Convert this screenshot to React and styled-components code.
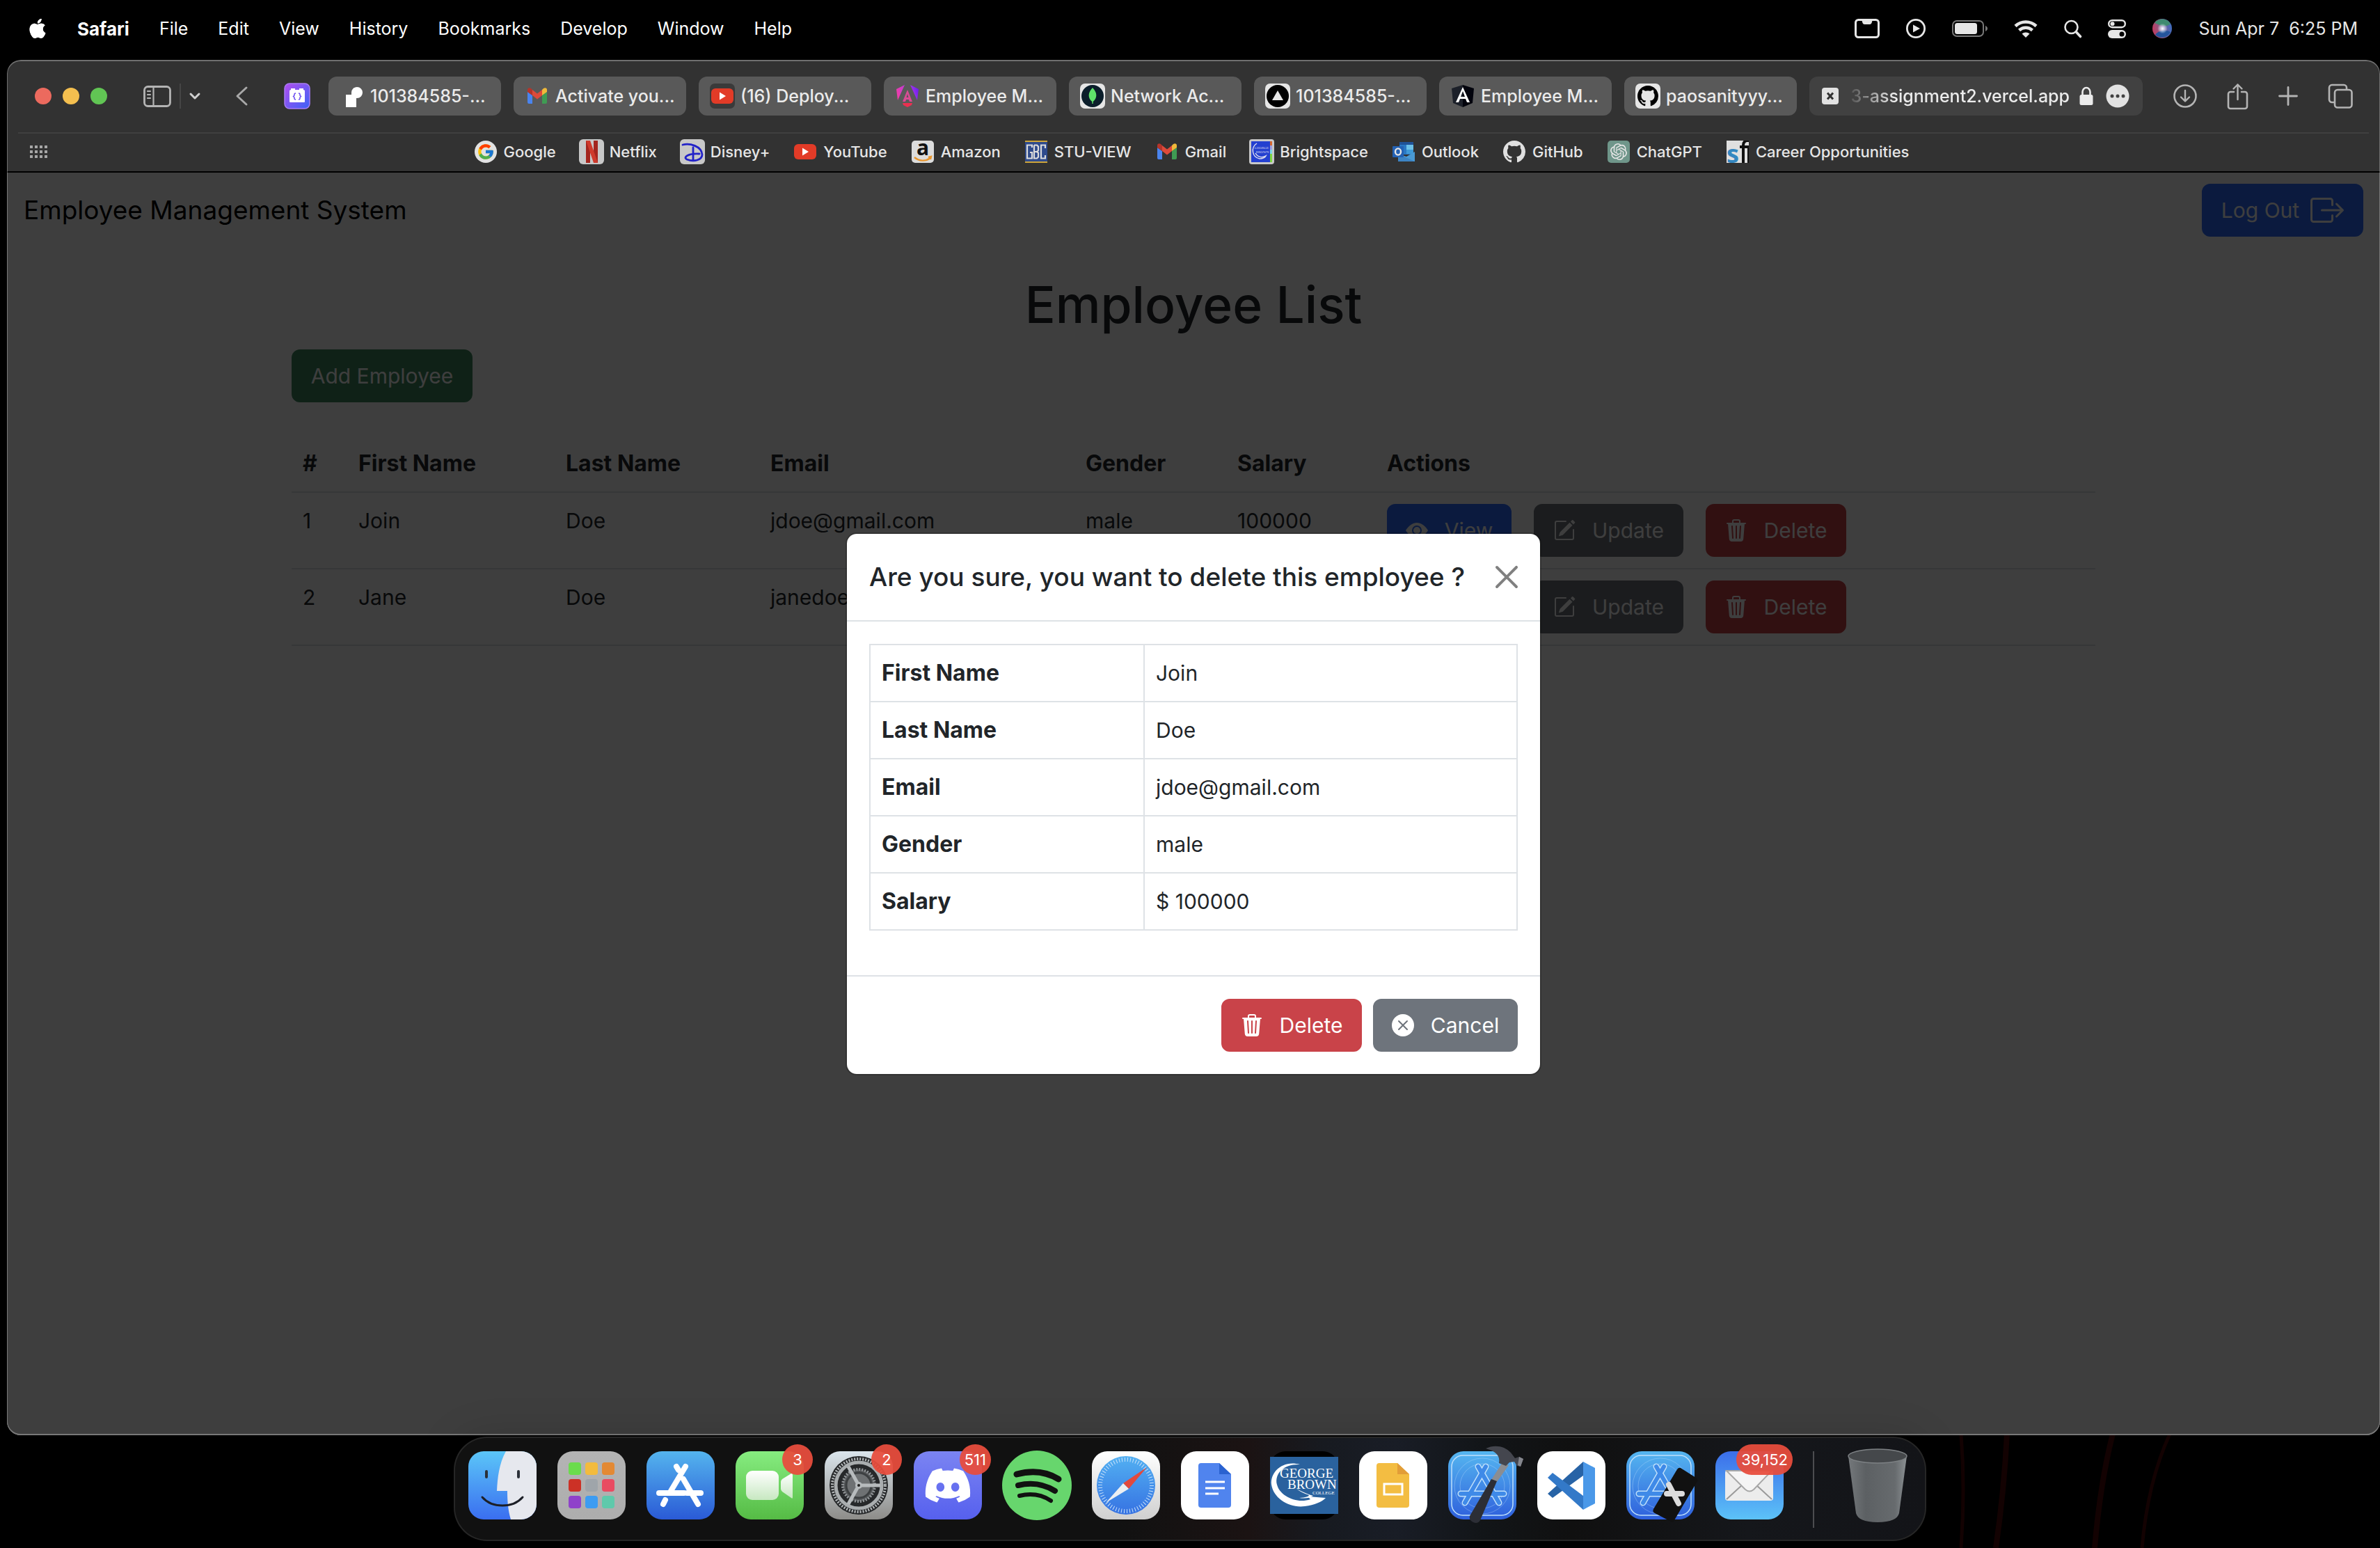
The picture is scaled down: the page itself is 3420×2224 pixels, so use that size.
import React from "react";
import styled, { createGlobalStyle, css } from "styled-components";
import {
  BsApple,
  BsBoxArrowRight,
  BsEyeFill,
  BsPencilSquare,
  BsTrash3Fill,
  BsXCircleFill,
  BsGithub,
} from "react-icons/bs";
import { FcGoogle } from "react-icons/fc";
import { FaDiscord } from "react-icons/fa";
import { SiOpenai } from "react-icons/si";

const GlobalStyle = createGlobalStyle`
  *, *::before, *::after { box-sizing: border-box; }
  body {
    margin: 0;
    background: #000;
    font-family: "Inter", "Liberation Sans", sans-serif;
    color: #212529;
  }
  h1, h2, p { margin: 0; }
  button { font-family: inherit; cursor: pointer; }
  svg { display: block; flex: none; overflow: visible; }
`;

/* ---------- Desktop ---------- */

const Desktop = styled.div`
  position: relative;
  display: flex;
  flex-direction: column;
  min-height: 100vh;
  padding-bottom: 10px;
  background: #000;
  overflow: hidden;
`;

const Wallpaper = styled.svg`
  position: absolute;
  right: 0;
  bottom: 0;
  width: 720px;
  height: 184px;
`;

const MenuBar = styled.header`
  display: flex;
  align-items: center;
  justify-content: space-between;
  height: 82px;
  padding: 0 32px 0 40px;
  color: #fff;
  font-size: 25px;
`;

const MenuList = styled.nav`
  display: flex;
  align-items: center;
  gap: 43px;
`;

const MenuItem = styled.button`
  padding: 0;
  border: 0;
  background: none;
  color: inherit;
  font-size: ${(p) => (p.$app ? "26px" : "25px")};
  font-weight: ${(p) => (p.$app ? 700 : 400)};
`;

const StatusList = styled.div`
  display: flex;
  align-items: center;
  gap: 38px;
  color: #e6e6e6;
`;

const Clock = styled.time`
  white-space: pre;
`;

/* ---------- Browser window ---------- */

const BrowserWindow = styled.main`
  position: relative;
  display: flex;
  flex: 1;
  flex-direction: column;
  margin: 4px 0 2px 10px;
  border-radius: 20px;
  background: #323232;
  overflow: hidden;

  &::after {
    content: "";
    position: absolute;
    inset: 0;
    border: 2px solid rgba(255, 255, 255, 0.3);
    border-left-width: 1px;
    border-right-width: 1px;
    border-radius: 20px;
    pointer-events: none;
  }
`;

const Toolbar = styled.div`
  display: flex;
  align-items: center;
  height: 104px;
  padding: 0 39px 0 40px;
  color: #b4b4b4;
`;

const TrafficLights = styled.div`
  display: flex;
  gap: 16px;
  margin-right: 52px;
`;

const Light = styled.button`
  width: 24px;
  height: 24px;
  padding: 0;
  border: 0;
  border-radius: 50%;
  background: ${(p) => p.$color};
`;

const ToolButton = styled.button`
  display: flex;
  padding: 0;
  border: 0;
  background: none;
  color: inherit;
`;

const SidebarTools = styled.div`
  display: flex;
  align-items: center;
  gap: 12px;
`;

const ToolDivider = styled.span`
  width: 2px;
  height: 36px;
  background: #464646;
`;

const NavTools = styled.div`
  display: flex;
  align-items: center;
  gap: 52px;
  margin: 0 26px 0 50px;
`;

const TabStrip = styled.div`
  display: grid;
  flex: 1;
  grid-template-columns: repeat(8, minmax(0, 1fr)) 479px;
  gap: 18px;
`;

const Tab = styled.button`
  display: flex;
  align-items: center;
  gap: 8px;
  height: 56px;
  padding: 0 16px;
  border: 0;
  border-radius: 12px;
  background: #595959;
  color: #ebebeb;
  font-size: 25px;
  font-weight: 500;
  white-space: nowrap;
`;

const AddressBar = styled.div`
  display: flex;
  align-items: center;
  height: 56px;
  padding: 0 19px 0 18px;
  border-radius: 12px;
  background: #414141;
  color: #ebebeb;
`;

const Address = styled.span`
  flex: 1;
  margin: 0 14px 0 16px;
  font-size: 25px;
  font-weight: 500;
  text-align: right;
  white-space: nowrap;
  mask-image: linear-gradient(to right, rgba(0, 0, 0, 0.1), #000 64px);
`;

const MoreButton = styled(ToolButton)`
  margin-left: 18px;
`;

const WindowTools = styled.div`
  display: flex;
  align-items: center;
  gap: 43px;
  margin-left: 44px;
`;

const Bookmarks = styled.nav`
  display: grid;
  grid-template-columns: 1fr auto 1fr;
  align-items: center;
  height: 56px;
  margin: 0 16px;
  padding: 0 24px 2px 17px;
  border-top: 2px solid #404040;
  color: #b4b4b4;
`;

const BookmarkList = styled.div`
  display: flex;
  align-items: center;
  gap: 33px;
`;

const Bookmark = styled.a`
  display: flex;
  align-items: center;
  gap: 8px;
  color: #e6e6e6;
  font-size: 22px;
  font-weight: 500;
  text-decoration: none;
  white-space: nowrap;
`;

/* ---------- Web page ---------- */

const Page = styled.section`
  position: relative;
  flex: 1;
  border-top: 2px solid #000;
  background: #fff;
  font-size: 30px;
  line-height: 48px;
`;

const Navbar = styled.div`
  display: flex;
  align-items: center;
  justify-content: space-between;
  padding: 16px 24px;
`;

const Brand = styled.a`
  color: #000;
  font-size: 37px;
  text-decoration: none;
`;

const tones = {
  primary: "#2e6cfe",
  success: "#3f8a60",
  secondary: "#6e747c",
  danger: "#c94349",
};

const Button = styled.button`
  display: inline-flex;
  align-items: center;
  justify-content: center;
  gap: ${(p) => (p.$wideIcon ? "16px" : "24px")};
  min-width: ${(p) => p.$minWidth}px;
  height: 76px;
  padding: 0 24px;
  border: 2px solid ${(p) => tones[p.$tone]};
  border-radius: 12px;
  background: ${(p) => tones[p.$tone]};
  color: #fff;
  font-size: 30px;
  line-height: 48px;
`;

const Container = styled.div`
  max-width: 2640px;
  margin: 34px auto 0;
  padding: 0 24px;
`;

const PageTitle = styled.h1`
  margin-bottom: 16px;
  font-size: 73px;
  font-weight: 500;
  line-height: 96px;
  text-align: center;
`;

const cell = css`
  padding: 16px;
  text-align: left;
  vertical-align: top;
`;

const EmployeeTable = styled.table`
  width: 100%;
  margin-top: 48px;
  table-layout: fixed;
  border-spacing: 0;

  th, td {
    ${cell}
    border-bottom: 2px solid #dee2e6;
  }
  th { font-size: 32px; font-weight: 700; }
`;

const Column = styled.col`
  width: ${(p) => p.$width}px;
`;

const RowActions = styled.div`
  display: flex;
  gap: 32px;
`;

/* ---------- Dialog ---------- */

const Backdrop = styled.div`
  position: absolute;
  inset: 0;
  display: flex;
  align-items: center;
  justify-content: center;
  background: rgba(0, 0, 0, 0.757);
`;

const Dialog = styled.section`
  width: 1000px;
  border: 2px solid rgba(0, 0, 0, 0.175);
  border-radius: 16px;
  background: #fff;
  background-clip: padding-box;
`;

const DialogHeader = styled.div`
  display: flex;
  align-items: center;
  justify-content: space-between;
  padding: 32px;
  border-bottom: 2px solid #dee2e6;
`;

const DialogTitle = styled.h2`
  font-size: 37px;
  font-weight: 500;
  line-height: 60px;
`;

const CloseButton = styled.button`
  padding: 0;
  border: 0;
  background: none;
  color: #808080;
`;

const DialogBody = styled.div`
  padding: 32px 32px 64px;
`;

const DetailTable = styled.table`
  width: 100%;
  table-layout: fixed;
  border-collapse: collapse;

  th, td {
    ${cell}
    border: 2px solid #dee2e6;
  }
  th { width: 394px; font-size: 32px; font-weight: 700; }
`;

const DialogFooter = styled.div`
  display: flex;
  justify-content: flex-end;
  gap: 16px;
  padding: 32px;
  border-top: 2px solid #dee2e6;
`;

/* ---------- Dock ---------- */

const Dock = styled.footer`
  position: relative;
  display: flex;
  align-self: center;
  height: 150px;
  padding: 19px 4px 0;
  border: 2px solid rgba(255, 255, 255, 0.15);
  border-radius: 48px;
  background: linear-gradient(
    90deg,
    #111 45%,
    #1b1313 54%,
    #171a20 59%,
    #191d26 64%,
    #121518 70%,
    #101010 76%,
    #15171b 88%,
    #131418
  );
  background-clip: padding-box;
  box-shadow: 0 0 60px rgba(0, 0, 0, 0.15);
`;

const DockItem = styled.button`
  position: relative;
  display: flex;
  justify-content: center;
  align-items: flex-start;
  width: 128px;
  padding: 0;
  border: 0;
  background: none;
`;

const Badge = styled.span`
  position: absolute;
  top: -10px;
  right: 2px;
  min-width: 44px;
  height: 44px;
  padding: 0 7px;
  border-radius: 22px;
  background: rgba(232, 76, 61, 0.94);
  color: #fff;
  font-size: 22px;
  line-height: 44px;
  text-align: center;
`;

const DockDivider = styled.span`
  width: 2px;
  height: 110px;
  margin: 0 27px;
  background: #4c4d50;
`;

/* ---------- Menu bar and toolbar drawings ---------- */

const stroke = { fill: "none", stroke: "currentColor", strokeLinecap: "round", strokeLinejoin: "round" };

const NotchIcon = () => (
  <svg width="36" height="28" viewBox="0 0 36 28">
    <rect x="1.5" y="1.5" width="33" height="25" rx="4" {...stroke} strokeWidth="3" />
    <path d="M10 1h16l-1.500 5a3 3 0 0 1-3 2h-7a3 3 0 0 1-3-2z" fill="currentColor" />
  </svg>
);
const PlayIcon = () => (
  <svg width="28" height="28" viewBox="0 0 28 28">
    <circle cx="14" cy="14" r="12.600" {...stroke} strokeWidth="2.800" />
    <path d="M10 8.500v11l10-5.500z" fill="currentColor" />
  </svg>
);
const BatteryIcon = () => (
  <svg width="51" height="24" viewBox="0 0 51 24">
    <rect x="1" y="1" width="44" height="22" rx="6" fill="none" stroke="#777" strokeWidth="2" />
    <rect x="4" y="4" width="32" height="16" rx="3.500" fill="currentColor" />
    <path d="M48 8c4 1.500 4 6.500 0 8z" fill="#777" />
  </svg>
);
const WifiIcon = () => (
  <svg width="34" height="26" viewBox="0 0 34 26">
    <path d="M2 9.500C10.500 1.500 23.500 1.500 32 9.500" {...stroke} strokeLinecap="butt" strokeWidth="4.500" />
    <path d="M7.500 15.500c5.500-5 13.500-5 19 0" {...stroke} strokeLinecap="butt" strokeWidth="4.500" />
    <path d="M17 26l-5.500-5.600c3-2.700 8-2.700 11 0z" fill="currentColor" />
  </svg>
);
const SearchIcon = () => (
  <svg width="25" height="26" viewBox="0 0 25 26">
    <circle cx="10.500" cy="11" r="9" {...stroke} strokeWidth="2.600" />
    <path d="M17.500 18l6 6.500" {...stroke} strokeWidth="3.600" />
  </svg>
);
const ControlIcon = () => (
  <svg width="26" height="27" viewBox="0 0 26 27">
    <rect x="1.200" y="1.200" width="23.600" height="10" rx="5" {...stroke} strokeWidth="2.400" />
    <circle cx="6.500" cy="6.200" r="3" fill="currentColor" />
    <rect y="15" width="26" height="12" rx="6" fill="currentColor" />
    <circle cx="20" cy="21" r="3.500" fill="#000" />
  </svg>
);
const SiriIcon = () => (
  <svg width="28" height="28" viewBox="0 0 28 28">
    <defs>
      <radialGradient id="siriGlow" cx=".52" cy=".5" r=".3"><stop offset="0" stopColor="#fff" /><stop offset=".3" stopColor="#e8f0ff" stopOpacity=".8" /><stop offset="1" stopColor="#fff" stopOpacity="0" /></radialGradient>
      <linearGradient id="siriBase" x1="0" y1=".6" x2="1" y2=".4"><stop offset="0" stopColor="#c23a5e" /><stop offset=".4" stopColor="#8b5a86" /><stop offset="1" stopColor="#3d6cc0" /></linearGradient>
    </defs>
    <circle cx="14" cy="14" r="14" fill="url(#siriBase)" />
    <path d="M3 6a14 14 0 0 1 23 1c-5 5-12 4-23-1z" fill="#3f8a70" />
    <path d="M4 23c5-7 15-8 22-4a14 14 0 0 1-22 4z" fill="#24549c" />
    <circle cx="14" cy="14" r="12" fill="url(#siriGlow)" />
  </svg>
);

const SidebarIcon = () => (
  <svg width="40" height="31" viewBox="0 0 40 31">
    <rect x="1.500" y="1.500" width="37" height="28" rx="5" {...stroke} strokeWidth="2.800" />
    <path d="M14.500 2v27M6 8h4M6 13h4M6 18h4" {...stroke} strokeWidth="2.200" />
  </svg>
);
const ChevronIcon = () => (
  <svg width="16" height="10" viewBox="0 0 16 10"><path d="M2 2l6 6 6-6" {...stroke} strokeWidth="3" stroke="#d0d0d0" /></svg>
);
const BackIcon = () => (
  <svg width="18" height="28" viewBox="0 0 18 28"><path d="M16 2L3 14l13 12" {...stroke} strokeWidth="3" stroke="#a8a8a8" /></svg>
);
const ExtensionIcon = () => (
  <svg width="38" height="38" viewBox="0 0 38 38">
    <defs><linearGradient id="extBg" x1="0" y1="0" x2="1" y2="1"><stop offset="0" stopColor="#b34df0" /><stop offset="1" stopColor="#3a63f6" /></linearGradient></defs>
    <rect x="1" y="1" width="36" height="36" rx="7" fill="url(#extBg)" stroke="#a77bf5" strokeWidth="1.500" />
    <path d="M8 27V11l2-1V8h6v2h6V8h6v2l2 1v16a1 1 0 0 1-1 1H9a1 1 0 0 1-1-1z" fill="#fff" />
    <path d="M17 15q-2.500 0-2 3l-1.500 1.500L15 21q-.5 3 2 3M21 15q2.500 0 2 3l1.500 1.500L23 21q.5 3-2 3" fill="none" stroke="#6b4df0" strokeWidth="1.500" />
  </svg>
);
const StopIcon = () => (
  <svg width="24" height="24" viewBox="0 0 24 24">
    <rect width="24" height="24" rx="4" fill="#e2e2e2" />
    <path d="M8 7.500l8 9M16 7.500l-8 9" stroke="#333" strokeWidth="3" />
  </svg>
);
const LockIcon = () => (
  <svg width="20" height="28" viewBox="0 0 20 28">
    <path d="M4.500 13V8a5.500 6 0 0 1 11 0v5" {...stroke} strokeWidth="2.600" />
    <rect x=".5" y="12" width="19" height="15" rx="2.500" fill="currentColor" />
  </svg>
);
const MoreIcon = () => (
  <svg width="34" height="34" viewBox="0 0 34 34">
    <circle cx="17" cy="17" r="16.500" fill="#e2e2e2" />
    <circle cx="9" cy="17" r="2.500" fill="#414141" /><circle cx="17" cy="17" r="2.500" fill="#414141" /><circle cx="25" cy="17" r="2.500" fill="#414141" />
  </svg>
);
const DownloadIcon = () => (
  <svg width="34" height="34" viewBox="0 0 34 34">
    <circle cx="17" cy="17" r="15.500" {...stroke} strokeWidth="2.600" />
    <path d="M17 9v15M11 18.500l6 6 6-6" {...stroke} strokeWidth="2.400" />
  </svg>
);
const ShareIcon = () => (
  <svg width="31" height="37" viewBox="0 0 31 37">
    <path d="M10 12H5a3 3 0 0 0-3 3v18a3 3 0 0 0 3 3h21a3 3 0 0 0 3-3V15a3 3 0 0 0-3-3h-5" {...stroke} strokeWidth="2.600" />
    <path d="M15.500 23V1.500M9.500 7.500l6-6 6 6" {...stroke} strokeWidth="2.400" />
  </svg>
);
const PlusIcon = () => (
  <svg width="28" height="28" viewBox="0 0 28 28"><path d="M14 1.500v25M1.500 14h25" {...stroke} strokeWidth="2.800" /></svg>
);
const OverviewIcon = () => (
  <svg width="36" height="36" viewBox="0 0 36 36">
    <rect x="10" y="9" width="24.500" height="25.500" rx="4" {...stroke} strokeWidth="2.600" />
    <path d="M9 27H6a4 4 0 0 1-4-4V6a4 4 0 0 1 4-4h17a4 4 0 0 1 4 4v2" {...stroke} strokeWidth="2.600" />
  </svg>
);
const DotsIcon = () => (
  <svg width="26" height="18" viewBox="0 0 26 18" fill="#a6a6a6">
    {[0, 7, 14].map((y) => [0, 7, 14, 21].map((x) => <rect key={`${x}-${y}`} x={x} y={y} width="4" height="4" />))}
  </svg>
);

/* ---------- Site icons ---------- */

const Favicon = ({ children }) => <svg width="36" height="36" viewBox="0 0 36 36">{children}</svg>;

const NodeMark = () => (
  <Favicon><path d="M9 34V16h8v-3a8 8 0 1 1 8 8h-1v13z" fill="#fff" /></Favicon>
);
const GmailMark = () => (
  <Favicon>
    <path d="M4 29V12l7 5v12H6a2 2 0 0 1-2-2z" fill="#4a84ee" />
    <path d="M32 29V12l-7 5v12h5a2 2 0 0 0 2-2z" fill="#3f9b53" />
    <path d="M4 12V9c0-3 3-3.500 5-2l2 2v8z" fill="#b5342a" />
    <path d="M32 12V9c0-3-3-3.500-5-2l-2 2v8z" fill="#f0b93a" />
    <path d="M11 9l7 5.500L25 9v8l-7 5.500L11 17z" fill="#dd4a3b" />
  </Favicon>
);
const YouTubeMark = ({ $plate }) => (
  <Favicon>
    {$plate && <rect width="36" height="36" rx="7" fill="#3a3a3a" />}
    <rect x="2" y="7" width="32" height="22" rx="6" fill="#e23b27" />
    <path d="M14 12.500v11l9-5.500z" fill="#fff" />
  </Favicon>
);
const AngularGradientMark = () => (
  <Favicon>
    <defs><linearGradient id="ngMark" x1="0" y1=".5" x2="1" y2=".3"><stop offset="0" stopColor="#ee3ea8" /><stop offset=".6" stopColor="#b338e6" /><stop offset="1" stopColor="#6a1ff2" /></linearGradient></defs>
    <path d="M14 2L2 8l2 16zM22 2l12 6-2 16z" fill="url(#ngMark)" />
    <path d="M18 9l7 17h-4l-1.200-3h-3.600L15 26h-4zM18 15l-1.500 5h3z" fill="#d94c94" fillRule="evenodd" />
    <path d="M11 28h14l-1 3-6 3-6-3z" fill="#ea3050" />
  </Favicon>
);
const MongoMark = () => (
  <Favicon>
    <rect width="36" height="36" rx="7" fill="#e6e6e6" />
    <circle cx="18" cy="18" r="16" fill="#0b1e2b" />
    <path d="M18 6c7 7 7 15 0.700 20v3h-1.400v-3C11 21 11 13 18 6z" fill="#5fe36a" />
  </Favicon>
);
const VercelMark = () => (
  <Favicon>
    <rect width="36" height="36" rx="7" fill="#e6e6e6" />
    <circle cx="18" cy="18" r="16" fill="#000" />
    <path d="M18 10l8 14H10z" fill="#e6e6e6" />
  </Favicon>
);
const AngularShieldMark = () => (
  <Favicon>
    <path d="M18 2L34 7l-2 21-14 6z" fill="#02030c" /><path d="M18 2L2 7l2 21 14 6z" fill="#1c2029" />
    <path d="M18 5l10 22h-4l-2-5h-8l-2 5H8zM18 11l-3 8h6z" fill="#fff" fillRule="evenodd" />
  </Favicon>
);
const GitHubTabMark = () => (
  <Favicon><rect width="36" height="36" rx="7" fill="#e6e6e6" /><BsGithub x="3" y="3" size="30" color="#000" /></Favicon>
);
const GoogleMark = () => (
  <Favicon><circle cx="18" cy="18" r="16" fill="#e2e2e2" /><FcGoogle x="5" y="5" size="26" /></Favicon>
);
const NetflixMark = () => (
  <Favicon>
    <rect width="36" height="36" rx="6" fill="#c8c8c8" />
    <path d="M10 2h6v32h-6zM21 2h6v32h-6z" fill="#a4261f" /><path d="M10 2h6l11 32h-6z" fill="#cf3a2c" />
  </Favicon>
);
const DisneyMark = () => (
  <Favicon>
    <rect width="36" height="36" rx="6" fill="#c8c8c8" />
    <path d="M4 8c10-3 27 2 28 14 0 8-12 11-22 7-6-3 2-9 18-8M19 12v18" fill="none" stroke="#2222c8" strokeWidth="2.800" strokeLinecap="round" />
  </Favicon>
);
const AmazonMark = () => (
  <Favicon>
    <rect x="2" y="2" width="32" height="32" rx="5" fill="#dcdcdc" />
    <text x="18" y="23" textAnchor="middle" fontFamily="Open Sans, sans-serif" fontWeight="700" fontSize="30" fill="#111">a</text>
    <path d="M6 26c7 6 16 6 23 1M26 26l4-1-1 4" fill="none" stroke="#e8962e" strokeWidth="2.400" />
  </Favicon>
);
const StuViewMark = () => (
  <Favicon>
    <rect x="2" y="2" width="32" height="32" fill="#2f4b8c" /><path d="M2 3h32M2 33h32" stroke="#cda53a" strokeWidth="2" />
    <g fill="none" stroke="#dcdcdc" strokeWidth="2.200">
      <path d="M12 12V8.500H5v19h7V19H9M15 8.500v19h4l2-2v-6l-2-1.500h-4M19 18l2-2v-5.500l-2-2h-4M31 13V8.500h-6v19h6V23" />
    </g>
  </Favicon>
);
const BrightspaceMark = () => (
  <Favicon>
    <rect width="36" height="36" rx="4" fill="#c8c8c8" /><rect x="3" y="3" width="27" height="30" fill="#2440d0" />
    <path d="M30 3h3v6h-3z" fill="#d9682e" /><path d="M30 9h3v6h-3z" fill="#a0a0e0" /><path d="M30 15h3v6h-3z" fill="#7fd8e8" /><path d="M30 21h3v12h-3z" fill="#7fd840" />
    <text x="18" y="14" textAnchor="middle" fontFamily="Liberation Serif, serif" fontSize="5" fill="#dde">GEORGE</text>
    <text x="19" y="20" textAnchor="middle" fontFamily="Liberation Serif, serif" fontSize="5" fill="#dde">BROWN</text>
    <path d="M11 6C2 12 4 26 15 28c5 0 8-2 9-4-5 3-12 2-15-4" fill="none" stroke="#dde" strokeWidth="1.500" />
  </Favicon>
);
const OutlookMark = () => (
  <Favicon>
    <path d="M12 4h20v18H12z" fill="#2a78c4" /><path d="M12 4h20v4H12z" fill="#1f5298" /><path d="M22 8h10v7H22z" fill="#6cc0e8" /><path d="M22 15h10v6H22z" fill="#3f9ad8" />
    <path d="M10 21l12 4 12-7v14H10z" fill="#4a9ad4" /><path d="M10 21v11h24z" fill="#3c84c4" />
    <rect x="2" y="10" width="16" height="16" rx="1" fill="#2462b4" /><ellipse cx="10" cy="18" rx="4" ry="4.600" fill="none" stroke="#e6e6e6" strokeWidth="2.400" />
  </Favicon>
);
const GitHubMark = () => <Favicon><BsGithub x="2" y="2" size="32" color="#e0e0e0" /></Favicon>;
const ChatGptMark = () => (
  <Favicon><rect x="2" y="2" width="32" height="32" rx="5" fill="#6f968a" /><SiOpenai x="6" y="6" size="24" color="#e6e6e6" /></Favicon>
);
const CareerMark = () => (
  <Favicon>
    <defs><clipPath id="careerClip"><rect x="2" y="2" width="32" height="32" /></clipPath></defs>
    <g clipPath="url(#careerClip)">
      <rect x="2" y="2" width="32" height="32" fill="#e0e0e0" />
      <text x="2" y="34" fontFamily="Open Sans, sans-serif" fontWeight="700" fontSize="36" fill="#3487c0">s</text>
      <path d="M34 0h-3q-7 1-7 9h-3v4h3v21h4V13h6V9h-6q0-4 3-5h3z" fill="#111" />
      <path d="M32 13h2v21h-2z" fill="#111" />
    </g>
  </Favicon>
);

/* ---------- Dock drawings ---------- */

const Gradient = ({ id, from, to }) => (
  <linearGradient id={id} x1="0" y1="0" x2="0" y2="1"><stop offset="0" stopColor={from} /><stop offset="1" stopColor={to} /></linearGradient>
);
const AppIcon = ({ id, from, to, children }) => (
  <svg width="98" height="98" viewBox="0 0 98 98">
    <defs><Gradient id={id} from={from} to={to} /><clipPath id={`${id}Clip`}><rect width="98" height="98" rx="22" /></clipPath></defs>
    <rect width="98" height="98" rx="22" fill={`url(#${id})`} />
    {children}
  </svg>
);
const FinderIcon = () => (
  <AppIcon id="finder" from="#5bc6f8" to="#3a6ef0">
    <path clipPath="url(#finderClip)" d="M54 0C44 18 42 38 41 57h15c0 14 1 28 5 41h37V0z" fill="#e6e8ee" />
    <path d="M26 29v8M72 29v8" stroke="#2b3038" strokeWidth="4" strokeLinecap="round" />
    <path d="M20 66c14 16 44 16 58 0" fill="none" stroke="#1c1f26" strokeWidth="3" strokeLinecap="round" />
  </AppIcon>
);
const launchColors = ["#6bdc4c", "#f3bb3d", "#e38934", "#cc3126", "#9fa5aa", "#e94b62", "#8f42ca", "#3d9cf2", "#5fc9ab"];
const LaunchpadIcon = () => (
  <AppIcon id="launchpad" from="#b4b4b4" to="#adadad">
    {launchColors.map((c, i) => <rect key={c} x={16 + (i % 3) * 24} y={16 + Math.floor(i / 3) * 24} width="18" height="18" rx="4" fill={c} />)}
  </AppIcon>
);
const AppStoreIcon = () => (
  <AppIcon id="appstore" from="#54b4ee" to="#2a5ad6">
    <path d="M56 22L35 57M27 70l-3 6M18 60h26M58 60h20M43 22l3 5M53 40l21 36M44 60h10" fill="none" stroke="#fff" strokeWidth="8" strokeLinecap="round" />
  </AppIcon>
);
const FaceTimeIcon = () => (
  <AppIcon id="facetime" from="#86ec80" to="#55bb45">
    <defs><Gradient id="ftBody" from="#ffffff" to="#c7e8c1" /></defs>
    <rect x="15" y="28" width="47" height="42" rx="9" fill="url(#ftBody)" />
    <path d="M65 44q0-2 2-4l13-8q2-1 2 2v32q0 3-2 1L67 58q-2-2-2-4z" fill="url(#ftBody)" />
  </AppIcon>
);
const SettingsIcon = () => (
  <AppIcon id="settings" from="#dbe5ec" to="#8d8c89">
    <circle cx="49" cy="49" r="42" fill="#26282a" />
    <circle cx="49" cy="49" r="38" fill="none" stroke="#b4b8ba" strokeWidth="4" strokeDasharray="2 2" />
    <circle cx="49" cy="49" r="33" fill="none" stroke="#a9adaf" strokeWidth="5" />
    <circle cx="49" cy="49" r="23" fill="#55585a" stroke="#93979a" strokeWidth="4" strokeDasharray="2 2" />
    <circle cx="49" cy="49" r="18" fill="#6e7173" stroke="#3c3f41" strokeWidth="3" />
    <path d="M49 49h31M49 49L34 22M49 49L34 76" stroke="#b7bbbd" strokeWidth="5" />
    <circle cx="49" cy="49" r="5" fill="#b7bbbd" /><circle cx="49" cy="49" r="2" fill="#222" />
  </AppIcon>
);
const DiscordIcon = () => (
  <AppIcon id="discord" from="#7b84f2" to="#5660ee"><FaDiscord x="14" y="14" size="70" color="#fff" /></AppIcon>
);
const SpotifyIcon = () => (
  <svg width="98" height="98" viewBox="0 0 98 98">
    <circle cx="49" cy="49" r="50" fill="#67d66d" />
    <path d="M20 33q34-9 60 7" fill="none" stroke="#111" strokeWidth="9" strokeLinecap="round" />
    <path d="M22 49q29-7 53 8" fill="none" stroke="#111" strokeWidth="8" strokeLinecap="round" />
    <path d="M24 64q25-6 45 7" fill="none" stroke="#111" strokeWidth="6" strokeLinecap="round" />
  </svg>
);
const SafariIcon = () => (
  <AppIcon id="safari" from="#ffffff" to="#cfcfcf">
    <defs><Gradient id="safariDial" from="#52b0f2" to="#3672e2" /></defs>
    <circle cx="49" cy="49" r="42" fill="url(#safariDial)" />
    <circle cx="49" cy="49" r="37" fill="none" stroke="#c9e2fa" strokeWidth="6" strokeDasharray="1 3" />
    <path d="M79 23L53 54l-8-8z" fill="#e2493d" /><path d="M20 74l25-28 8 8z" fill="#eceff2" />
  </AppIcon>
);
const DocsIcon = () => (
  <AppIcon id="docs" from="#ffffff" to="#ffffff">
    <path d="M29 17h26l17 16v44a4 4 0 0 1-4 4H29a4 4 0 0 1-4-4V21a4 4 0 0 1 4-4z" fill="#5084ee" /><path d="M55 17l17 16H55z" fill="#2a62d0" />
    <path d="M35 44h28M35 53h28M35 61h19" stroke="#fff" strokeWidth="3" />
  </AppIcon>
);
const CollegeIcon = () => (
  <AppIcon id="college" from="#000000" to="#000000">
    <rect y="8" width="98" height="82" fill="#2a629e" />
    <path d="M43 19C18 12 0 30 2 48c3 20 26 34 48 31 14-2 24-6 30-12l-26-2 4 4C38 76 14 64 10 48 6 32 20 18 43 19z" fill="#fff" />
    <path d="M38 54q16 8 24 10-8 5-20 3 14-1 14-4-10-3-18-9z" fill="#fff" />
    <text x="14" y="38" fontFamily="Liberation Serif, serif" fontSize="19" fill="#fff">GEORGE</text>
    <text x="25" y="54" fontFamily="Liberation Serif, serif" fontSize="19" fill="#fff">BROWN</text>
    <text x="61" y="62" fontFamily="Liberation Serif, serif" fontSize="7" fill="#fff">COLLEGE</text>
  </AppIcon>
);
const SlidesIcon = () => (
  <AppIcon id="slides" from="#ffffff" to="#ffffff">
    <path d="M29 17h26l17 16v44a4 4 0 0 1-4 4H29a4 4 0 0 1-4-4V21a4 4 0 0 1 4-4z" fill="#f3bd42" /><path d="M55 17l17 16H55z" fill="#e29d38" />
    <rect x="36" y="47" width="26" height="15" fill="none" stroke="#fff" strokeWidth="3" />
  </AppIcon>
);
const Blueprint = () => (
  <g fill="none" stroke="#bfe0fb">
    <rect x="5" y="6" width="88" height="86" rx="16" strokeWidth="1.500" />
    <circle cx="49" cy="50" r="40" strokeWidth="1" opacity=".35" /><circle cx="49" cy="50" r="32" strokeWidth="1" opacity=".35" />
    <g strokeWidth="9" strokeLinecap="round"><path d="M54 22L24 74M18 61h62M43 22l30 52" /></g>
    <g strokeWidth="6" stroke="#3f8ae8" strokeLinecap="round"><path d="M54 22L24 74M18 61h62M43 22l30 52" /></g>
  </g>
);
const XcodeIcon = () => (
  <AppIcon id="xcode" from="#55b6f0" to="#2e5fdc">
    <Blueprint />
    <path d="M78 16l9 4-17 24-8-3z" fill="#8b8d92" />
    <path d="M62 40l8 3-24 56c-2 4-6 5-10 3s-6-5-5-9z" fill="#2c2e36" />
    <path d="M54-4c12-6 27-4 36 6l6 8 6-2 6 3-4 11-5-1-4-6-7 1-5 5-10-4c2-10-4-17-19-21z" fill="#44464e" />
    <path d="M102 8l6 3-4 11-4-2z" fill="#85878e" />
  </AppIcon>
);
const CodeIcon = () => (
  <AppIcon id="code" from="#ffffff" to="#ffffff">
    <path d="M15 61l7 6 44-32V15z" fill="#2763a6" /><path d="M15 38l7-7 44 33v20z" fill="#3379c8" /><path d="M66 15l17 9v51l-17 9z" fill="#4a98e8" />
  </AppIcon>
);
const SimulatorIcon = () => (
  <AppIcon id="simulator" from="#55b6f0" to="#2e5fdc">
    <Blueprint />
    <path d="M78 24l22 14q3 2 2 5L69 99q-2 4-5 2L41 89q-4-2-2-6l34-57q2-3 5-2z" fill="#111" />
    <path d="M58 61h22M61 48l14 27" stroke="#dcdcdc" strokeWidth="8" strokeLinecap="round" />
  </AppIcon>
);
const MailIcon = () => (
  <AppIcon id="mail" from="#3b6eea" to="#5cc2f8">
    <rect x="14" y="27" width="69" height="44" rx="4" fill="#ececec" />
    <path d="M16 69l24-22M81 69L57 47" stroke="#9a9a9a" strokeWidth="2" /><path d="M16 28l27 27q6 5 12 0l26-27z" fill="#f5f5f5" stroke="#a8a8a8" strokeWidth="2" />
  </AppIcon>
);
const TrashIcon = () => (
  <svg width="98" height="98" viewBox="0 0 98 98">
    <defs><linearGradient id="trash"><stop offset="0" stopColor="#74787b" /><stop offset=".3" stopColor="#5c6063" /><stop offset=".8" stopColor="#676b6e" /><stop offset="1" stopColor="#8c9194" /></linearGradient></defs>
    <path d="M7 7l11 82c2 8 12 13 31 13s29-5 31-13L91 7z" fill="url(#trash)" />
    <ellipse cx="49" cy="7" rx="42" ry="10" fill="#45484b" stroke="#7d8184" strokeWidth="1.500" />
  </svg>
);

/* ---------- Data ---------- */

const menus = ["File", "Edit", "View", "History", "Bookmarks", "Develop", "Window", "Help"];

const tabs = [
  ["101384585-...", <NodeMark />],
  ["Activate you...", <GmailMark />],
  ["(16) Deploy...", <YouTubeMark $plate />],
  ["Employee M...", <AngularGradientMark />],
  ["Network Ac...", <MongoMark />],
  ["101384585-...", <VercelMark />],
  ["Employee M...", <AngularShieldMark />],
  ["paosanityyy...", <GitHubTabMark />],
];

const bookmarks = [
  ["Google", <GoogleMark />],
  ["Netflix", <NetflixMark />],
  ["Disney+", <DisneyMark />],
  ["YouTube", <YouTubeMark />],
  ["Amazon", <AmazonMark />],
  ["STU-VIEW", <StuViewMark />],
  ["Gmail", <GmailMark />],
  ["Brightspace", <BrightspaceMark />],
  ["Outlook", <OutlookMark />],
  ["GitHub", <GitHubMark />],
  ["ChatGPT", <ChatGptMark />],
  ["Career Opportunities", <CareerMark />],
];

const columns = [
  ["#", 80],
  ["First Name", 298],
  ["Last Name", 294],
  ["Email", 453],
  ["Gender", 218],
  ["Salary", 215],
];

const employees = [
  ["1", "Join", "Doe", "jdoe@gmail.com", "male", "100000"],
  ["2", "Jane", "Doe", "janedoe@gmail.com", "female", "100000"],
];

const details = [
  ["First Name", "Join"],
  ["Last Name", "Doe"],
  ["Email", "jdoe@gmail.com"],
  ["Gender", "male"],
  ["Salary", "$ 100000"],
];

const apps = [
  ["Finder", <FinderIcon />],
  ["Launchpad", <LaunchpadIcon />],
  ["App Store", <AppStoreIcon />],
  ["FaceTime", <FaceTimeIcon />, "3"],
  ["System Settings", <SettingsIcon />, "2"],
  ["Discord", <DiscordIcon />, "511"],
  ["Spotify", <SpotifyIcon />],
  ["Safari", <SafariIcon />],
  ["Google Docs", <DocsIcon />],
  ["George Brown College", <CollegeIcon />],
  ["Google Slides", <SlidesIcon />],
  ["Xcode", <XcodeIcon />],
  ["Visual Studio Code", <CodeIcon />],
  ["Simulator", <SimulatorIcon />],
  ["Mail", <MailIcon />, "39,152"],
];

/* ---------- App ---------- */

function SystemMenu() {
  return (
    <MenuBar>
      <MenuList aria-label="Menu bar">
        <MenuItem aria-label="Apple menu"><BsApple size="28" /></MenuItem>
        <MenuItem $app>Safari</MenuItem>
        {menus.map((m) => <MenuItem key={m}>{m}</MenuItem>)}
      </MenuList>
      <StatusList>
        <NotchIcon /><PlayIcon /><BatteryIcon /><WifiIcon /><SearchIcon /><ControlIcon /><SiriIcon />
        <Clock>Sun Apr 7  6:25 PM</Clock>
      </StatusList>
    </MenuBar>
  );
}

function BrowserChrome() {
  return (
    <>
      <Toolbar>
        <TrafficLights>
          <Light $color="#ec6a5e" aria-label="Close window" />
          <Light $color="#f4bf4f" aria-label="Minimise window" />
          <Light $color="#61c554" aria-label="Zoom window" />
        </TrafficLights>
        <SidebarTools>
          <ToolButton aria-label="Sidebar"><SidebarIcon /></ToolButton>
          <ToolDivider />
          <ToolButton aria-label="Tab groups"><ChevronIcon /></ToolButton>
        </SidebarTools>
        <NavTools>
          <ToolButton aria-label="Back"><BackIcon /></ToolButton>
          <ToolButton aria-label="Extension"><ExtensionIcon /></ToolButton>
        </NavTools>
        <TabStrip>
          {tabs.map(([label, icon], i) => <Tab key={i}>{icon}{label}</Tab>)}
          <AddressBar>
            <ToolButton aria-label="Close tab"><StopIcon /></ToolButton>
            <Address>3-assignment2.vercel.app</Address>
            <LockIcon />
            <MoreButton aria-label="More"><MoreIcon /></MoreButton>
          </AddressBar>
        </TabStrip>
        <WindowTools>
          <ToolButton aria-label="Downloads"><DownloadIcon /></ToolButton>
          <ToolButton aria-label="Share"><ShareIcon /></ToolButton>
          <ToolButton aria-label="New tab"><PlusIcon /></ToolButton>
          <ToolButton aria-label="Tab overview"><OverviewIcon /></ToolButton>
        </WindowTools>
      </Toolbar>
      <Bookmarks aria-label="Favourites">
        <DotsIcon />
        <BookmarkList>
          {bookmarks.map(([label, icon]) => <Bookmark key={label} href="#">{icon}{label}</Bookmark>)}
        </BookmarkList>
      </Bookmarks>
    </>
  );
}

function EmployeePage() {
  return (
    <Page>
      <Navbar>
        <Brand href="#">Employee Management System</Brand>
        <Button $tone="primary" $minWidth={232} $wideIcon>Log Out<BsBoxArrowRight size="48" /></Button>
      </Navbar>
      <Container>
        <PageTitle>Employee List</PageTitle>
        <Button $tone="success" $minWidth={260}>Add Employee</Button>
        <EmployeeTable>
          <colgroup>
            {columns.map(([name, width]) => <Column key={name} $width={width} />)}
            <col />
          </colgroup>
          <thead>
            <tr>
              {columns.map(([name]) => <th key={name} scope="col">{name}</th>)}
              <th scope="col">Actions</th>
            </tr>
          </thead>
          <tbody>
            {employees.map((row) => (
              <tr key={row[0]}>
                {row.map((value, i) => <td key={i}>{value}</td>)}
                <td>
                  <RowActions>
                    <Button $tone="primary" $minWidth={179}><BsEyeFill size="32" />View</Button>
                    <Button $tone="secondary" $minWidth={215}><BsPencilSquare size="32" />Update</Button>
                    <Button $tone="danger" $minWidth={202}><BsTrash3Fill size="32" />Delete</Button>
                  </RowActions>
                </td>
              </tr>
            ))}
          </tbody>
        </EmployeeTable>
      </Container>
      <Backdrop>
        <Dialog role="dialog" aria-labelledby="dialog-title">
          <DialogHeader>
            <DialogTitle id="dialog-title">Are you sure, you want to delete this employee ?</DialogTitle>
            <CloseButton aria-label="Close">
              <svg width="32" height="32" viewBox="0 0 16 16" fill="currentColor">
                <path d="M.293.293a1 1 0 0 1 1.414 0L8 6.586 14.293.293a1 1 0 1 1 1.414 1.414L9.414 8l6.293 6.293a1 1 0 0 1-1.414 1.414L8 9.414l-6.293 6.293a1 1 0 0 1-1.414-1.414L6.586 8 .293 1.707a1 1 0 0 1 0-1.414z" />
              </svg>
            </CloseButton>
          </DialogHeader>
          <DialogBody>
            <DetailTable>
              <tbody>
                {details.map(([name, value]) => (
                  <tr key={name}><th scope="row">{name}</th><td>{value}</td></tr>
                ))}
              </tbody>
            </DetailTable>
          </DialogBody>
          <DialogFooter>
            <Button $tone="danger" $minWidth={202}><BsTrash3Fill size="32" />Delete</Button>
            <Button $tone="secondary" $minWidth={208}><BsXCircleFill size="32" />Cancel</Button>
          </DialogFooter>
        </Dialog>
      </Backdrop>
    </Page>
  );
}

export default function App() {
  return (
    <>
      <GlobalStyle />
      <Desktop>
        <Wallpaper viewBox="0 0 720 184" fill="none" stroke="#130202" strokeWidth="8" aria-hidden="true">
          <path d="M118 20q6 80 0 164" strokeWidth="5" /><path d="M184 20q-4 80-16 164" /><path d="M336 20q-18 70-26 164" /><path d="M418 20q-32 70-40 164" strokeWidth="5" />
        </Wallpaper>
        <SystemMenu />
        <BrowserWindow>
          <BrowserChrome />
          <EmployeePage />
        </BrowserWindow>
        <Dock>
          {apps.map(([name, icon, count]) => (
            <DockItem key={name} aria-label={name}>{icon}{count && <Badge>{count}</Badge>}</DockItem>
          ))}
          <DockDivider />
          <DockItem aria-label="Bin"><TrashIcon /></DockItem>
        </Dock>
      </Desktop>
    </>
  );
}
